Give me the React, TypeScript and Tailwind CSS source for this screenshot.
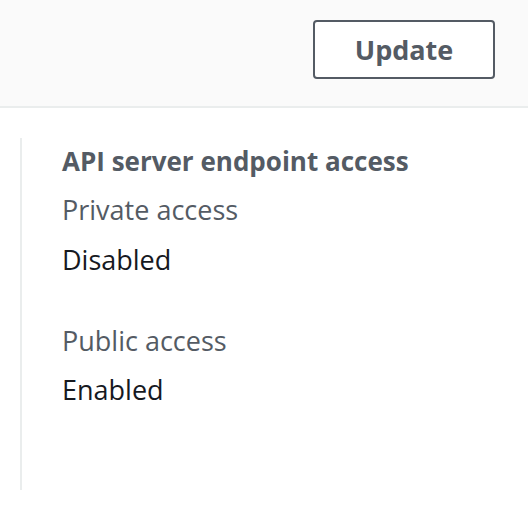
export default function App() {
  return (
    <div className="w-[528px] h-[518px] bg-white" style={{ fontFamily: '"Open Sans", sans-serif' }}>
      <div className="h-[108px] bg-[#fafafa] border-b-2 border-[#eaeded] flex justify-end items-start pt-[20px] pr-[33px]">
        <button className="w-[182px] h-[59px] border-2 border-[#545b64] rounded-[4px] bg-white text-[#545b64] text-[27px] font-bold leading-none">
          Update
        </button>
      </div>
      <div className="pt-[30px] pl-[20px]">
        <div className="border-l-2 border-[#eaeded] h-[352px] pl-[40px]">
          <h3 className="text-[26px] font-bold text-[#545b64] leading-[36px] pt-[5px]">
            API server endpoint access
          </h3>
          <div className="text-[27px] text-[#545b64] leading-[40px] mt-[11px]">Private access</div>
          <div className="text-[27px] text-[#16191f] leading-[40px] mt-[10px]">Disabled</div>
          <div className="text-[27px] text-[#545b64] leading-[40px] mt-[41px]">Public access</div>
          <div className="text-[27px] text-[#16191f] leading-[40px] mt-[9px]">Enabled</div>
        </div>
      </div>
    </div>
  )
}
